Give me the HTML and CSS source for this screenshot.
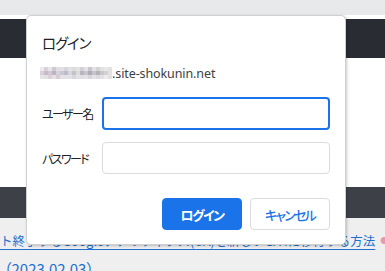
FILE: index.html
```html
<!DOCTYPE html>
<html lang="ja">
<head>
<meta charset="utf-8">
<title>ログイン</title>
<link rel="stylesheet" href="styles.css">
</head>
<body>
<div class="page">
  <div class="topbar"></div>
  <div class="strip"></div>
  <div class="header"></div>
  <div class="content"></div>
  <div class="nav"></div>
  <div class="post">
    <a class="post-link" href="#">ト終了するGoogleアナリティクス(UA)を新しいGA4に移行する方法</a><span class="post-mark">●</span>
    <div class="post-date">（2023.02.03）</div>
  </div>
</div>

<div class="dialog" role="dialog">
  <div class="dialog-title">ログイン</div>
  <div class="dialog-origin">
    <svg class="mosaic" width="72" height="12" viewBox="0 0 72 12" aria-hidden="true">
      <rect x="0" y="0" width="72" height="12" fill="#e4e1e4"/>
      <rect x="0" y="0" width="4" height="4" fill="#ece8ec"/>
      <rect x="4" y="0" width="4" height="4" fill="#d8d2d8"/>
      <rect x="8" y="0" width="4" height="4" fill="#e8e4e8"/>
      <rect x="12" y="0" width="4" height="4" fill="#cfc8d2"/>
      <rect x="16" y="0" width="4" height="4" fill="#e2dde2"/>
      <rect x="24" y="0" width="4" height="4" fill="#d6d4dc"/>
      <rect x="32" y="0" width="4" height="4" fill="#dcdcdc"/>
      <rect x="40" y="0" width="4" height="4" fill="#d2d0d6"/>
      <rect x="48" y="0" width="4" height="4" fill="#c8c6cc"/>
      <rect x="56" y="0" width="4" height="4" fill="#d4d2d4"/>
      <rect x="64" y="0" width="4" height="4" fill="#e6e6e6"/>
      <rect x="0" y="4" width="4" height="4" fill="#d8d0d6"/>
      <rect x="4" y="4" width="4" height="4" fill="#c4bcc6"/>
      <rect x="8" y="4" width="4" height="4" fill="#d0cad0"/>
      <rect x="12" y="4" width="4" height="4" fill="#bcb4c2"/>
      <rect x="16" y="4" width="4" height="4" fill="#d8d0d8"/>
      <rect x="20" y="4" width="4" height="4" fill="#c8c8d2"/>
      <rect x="24" y="4" width="4" height="4" fill="#bcbcc8"/>
      <rect x="28" y="4" width="4" height="4" fill="#d6d6dc"/>
      <rect x="32" y="4" width="4" height="4" fill="#c4c4c8"/>
      <rect x="36" y="4" width="4" height="4" fill="#dcdce0"/>
      <rect x="40" y="4" width="4" height="4" fill="#b8b6c0"/>
      <rect x="44" y="4" width="4" height="4" fill="#c8c4cc"/>
      <rect x="48" y="4" width="4" height="4" fill="#aeacb6"/>
      <rect x="52" y="4" width="4" height="4" fill="#c6c4c8"/>
      <rect x="56" y="4" width="4" height="4" fill="#b4b2b6"/>
      <rect x="60" y="4" width="4" height="4" fill="#c8c8c8"/>
      <rect x="64" y="4" width="4" height="4" fill="#d2d2d2"/>
      <rect x="68" y="4" width="4" height="4" fill="#e2e2e2"/>
      <rect x="0" y="8" width="4" height="4" fill="#e8e2e6"/>
      <rect x="8" y="8" width="4" height="4" fill="#dad2d8"/>
      <rect x="16" y="8" width="4" height="4" fill="#d6cbd6"/>
      <rect x="24" y="8" width="4" height="4" fill="#e2e2e8"/>
      <rect x="32" y="8" width="4" height="4" fill="#d8d8dc"/>
      <rect x="40" y="8" width="4" height="4" fill="#e0dee4"/>
      <rect x="48" y="8" width="4" height="4" fill="#d8d6dc"/>
      <rect x="56" y="8" width="4" height="4" fill="#dcdadc"/>
      <rect x="64" y="8" width="4" height="4" fill="#ececec"/>
    </svg><span class="origin-text">.site-shokunin.net</span>
  </div>
  <div class="field">
    <label class="field-label" for="user">ユーザー名</label>
    <input class="field-input is-focused" id="user" type="text">
  </div>
  <div class="field">
    <label class="field-label" for="pass">パスワード</label>
    <input class="field-input" id="pass" type="password">
  </div>
  <div class="actions">
    <button class="btn btn-primary" type="button">ログイン</button>
    <button class="btn btn-secondary" type="button">キャンセル</button>
  </div>
</div>
</body>
</html>
```

FILE: styles.css
```css
* { box-sizing: border-box; }

html, body {
  margin: 0;
  padding: 0;
  width: 385px;
  height: 271px;
  overflow: hidden;
  font-family: "Noto Sans CJK JP", "Noto Sans", sans-serif;
}

.page {
  background: #efefef;
  height: 271px;
}

.topbar { height: 15px; background: #e8e9eb; }
.strip { height: 4px; background: #ffffff; }
.header { height: 39px; background: #292c33; }
.content { height: 129px; background: #ffffff; }
.nav { height: 31px; background: #3d4047; }

.post {
  padding-top: 9px;
  white-space: nowrap;
  overflow: hidden;
}

.post-link {
  font-size: 12.5px;
  line-height: 20px;
  color: #1e6fd0;
  text-decoration: underline;
  text-underline-offset: 3px;
}

.post-mark {
  color: #e59ab0;
  font-size: 8px;
  margin-left: 5px;
  vertical-align: 2px;
}

.post-date {
  font-size: 15px;
  line-height: 20px;
  color: #1e6fd0;
  margin-top: 8px;
  margin-left: 4px;
  font-feature-settings: "palt";
}

.dialog {
  position: absolute;
  left: 26px;
  top: 15px;
  width: 320px;
  height: 230px;
  background: #ffffff;
  border: 1px solid #d0d0d0;
  border-radius: 5px;
  box-shadow: 1px 1px 3px rgba(0, 0, 0, 0.22);
  padding: 17px 15px 0 15px;
  color: #202124;
}

.dialog-title {
  font-size: 14.5px;
  line-height: 20px;
  letter-spacing: -1.2px;
  font-feature-settings: "palt";
}

.dialog-origin {
  display: flex;
  align-items: center;
  height: 18px;
  margin-top: 11px;
  margin-left: -2px;
}

.mosaic { display: block; flex: none; }

.origin-text {
  font-family: "Noto Sans", sans-serif;
  font-size: 12.5px;
  color: #3c4043;
  letter-spacing: -0.1px;
}

.field {
  display: flex;
  align-items: center;
  margin-top: 15px;
}

.field + .field { margin-top: 12px; }

.field-label {
  width: 60px;
  flex: none;
  font-size: 12px;
  white-space: nowrap;
  letter-spacing: -1.6px;
  font-feature-settings: "palt";
  color: #202124;
}

.field-input {
  width: 228px;
  height: 32px;
  border: 1px solid #dadce0;
  border-radius: 4px;
  outline: none;
  font-size: 13px;
  padding: 0 8px;
  background: #ffffff;
}

.field-input.is-focused {
  height: 33px;
  border: 2px solid #1a73e8;
}

.actions {
  display: flex;
  justify-content: flex-end;
  gap: 8px;
  margin-top: 24px;
}

.btn {
  width: 80px;
  height: 32px;
  border-radius: 4px;
  font-family: "Noto Sans CJK JP", sans-serif;
  font-size: 13px;
  font-weight: 700;
  letter-spacing: -1.5px;
  font-feature-settings: "palt";
  cursor: pointer;
  padding: 0;
}

.btn-primary {
  background: #1a73e8;
  border: 1px solid #1a73e8;
  color: #ffffff;
}

.btn-secondary {
  background: #ffffff;
  border: 1px solid #dadce0;
  color: #1a73e8;
  font-weight: 500;
  letter-spacing: -1.8px;
}
```
